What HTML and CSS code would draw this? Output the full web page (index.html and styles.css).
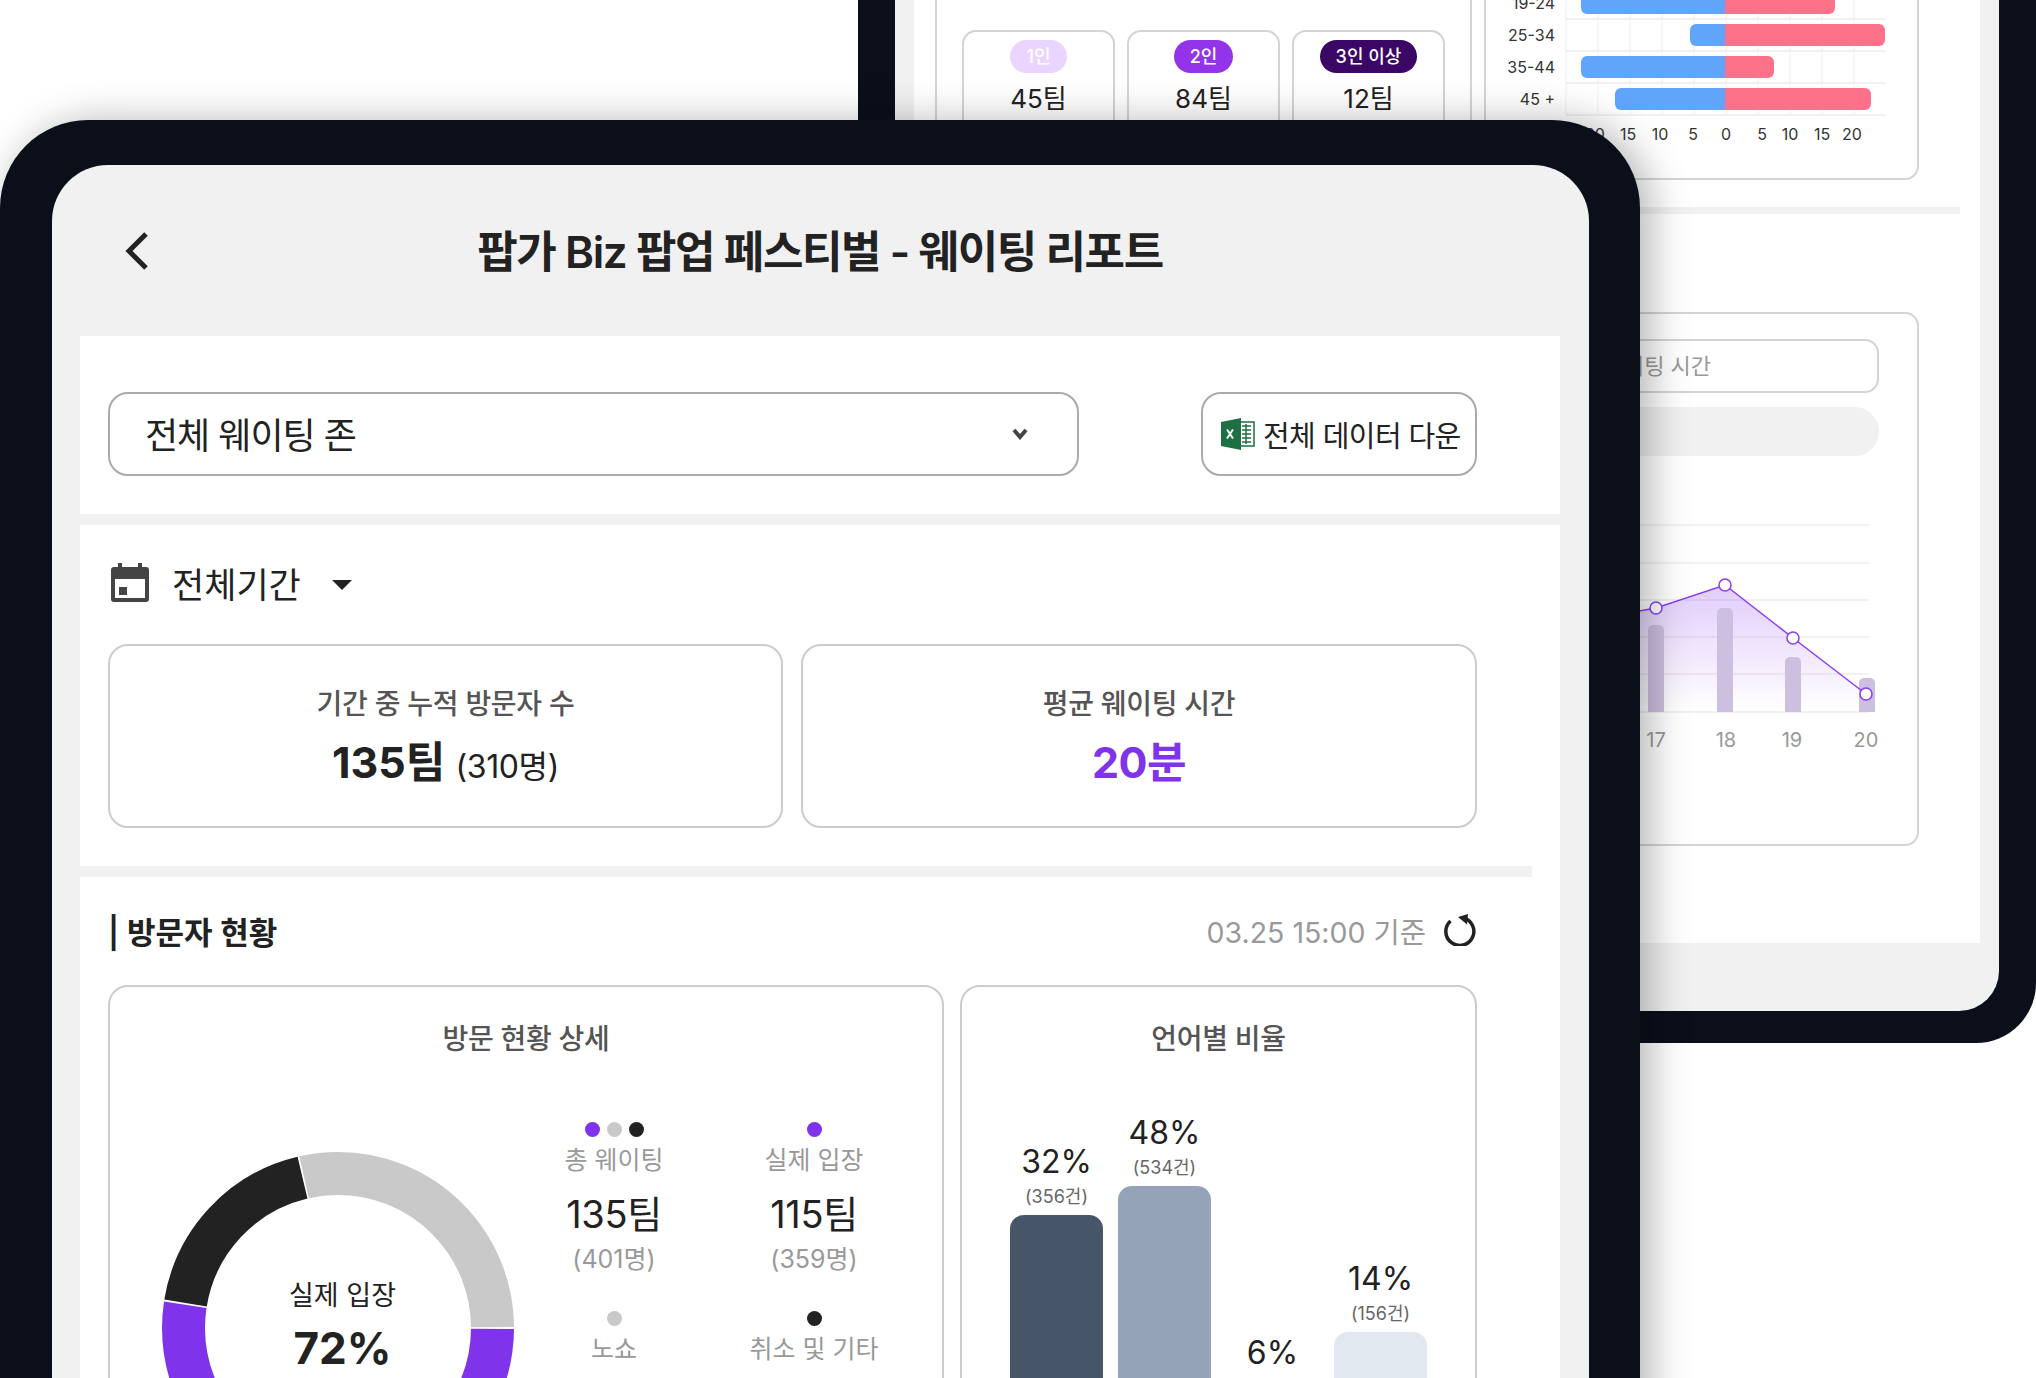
FILE: index.html
```html
<!DOCTYPE html>
<html lang="ko">
<head>
<meta charset="utf-8">
<title>웨이팅 리포트</title>
<link rel="stylesheet" href="styles.css">
</head>
<body>
<div class="stage">

  <!-- back tablet -->
  <div class="tablet-back">
    <div class="back-screen">
      <div class="back-page">
        <div class="back-row">
          <div class="back-card back-card-team">
            <div class="team-row">
              <div class="team"><span class="pill pill-1">1인</span><span class="team-num">45팀</span></div>
              <div class="team"><span class="pill pill-2">2인</span><span class="team-num">84팀</span></div>
              <div class="team"><span class="pill pill-3">3인 이상</span><span class="team-num">12팀</span></div>
            </div>
          </div>
          <div class="back-card back-card-age">
            <svg class="age-chart" viewBox="1486 -78 431 256" width="431" height="256">
              <g class="vgrid">
                <path d="M1566 -20V115M1598 -20V115M1630 -20V115M1662 -20V115M1694 -20V115M1726 -20V115M1758 -20V115M1790 -20V115M1822 -20V115M1854 -20V115"/>
              </g>
              <g class="hgrid">
                <path d="M1566 19H1885M1566 51H1885M1566 83H1885M1566 115H1885"/>
              </g>
              <path class="bar-blue" d="M1725 -8H1587a6 6 0 0 0-6 6v10a6 6 0 0 0 6 6H1725z"/>
              <path class="bar-pink" d="M1725 -8H1829a6 6 0 0 1 6 6v10a6 6 0 0 1-6 6H1725z"/>
              <path class="bar-blue" d="M1725 24H1696a6 6 0 0 0-6 6v10a6 6 0 0 0 6 6H1725z"/>
              <path class="bar-pink" d="M1725 24H1879a6 6 0 0 1 6 6v10a6 6 0 0 1-6 6H1725z"/>
              <path class="bar-blue" d="M1725 56H1587a6 6 0 0 0-6 6v10a6 6 0 0 0 6 6H1725z"/>
              <path class="bar-pink" d="M1725 56H1768a6 6 0 0 1 6 6v10a6 6 0 0 1-6 6H1725z"/>
              <path class="bar-blue" d="M1725 88H1621a6 6 0 0 0-6 6v10a6 6 0 0 0 6 6H1725z"/>
              <path class="bar-pink" d="M1725 88H1865a6 6 0 0 1 6 6v10a6 6 0 0 1-6 6H1725z"/>
              <g class="age-label">
                <text x="1555" y="9">19-24</text>
                <text x="1555" y="41">25-34</text>
                <text x="1555" y="73">35-44</text>
                <text x="1555" y="105">45 +</text>
              </g>
              <g class="age-axis">
                <text x="1595" y="140">20</text>
                <text x="1628" y="140">15</text>
                <text x="1660" y="140">10</text>
                <text x="1693" y="140">5</text>
                <text x="1726" y="140">0</text>
                <text x="1762" y="140">5</text>
                <text x="1790" y="140">10</text>
                <text x="1822" y="140">15</text>
                <text x="1852" y="140">20</text>
              </g>
            </svg>
          </div>
        </div>
        <div class="back-sep"></div>
        <div class="back-card back-card-time">
          <div class="time-input">평균 웨이팅 시간</div>
          <div class="time-pill"></div>
          <svg class="time-chart" viewBox="1600 500 300 270" width="300" height="270">
            <defs>
              <linearGradient id="areaGrad" x1="0" y1="0" x2="0" y2="1">
                <stop offset="0" stop-color="#8b3df0" stop-opacity=".26"/>
                <stop offset="1" stop-color="#8b3df0" stop-opacity="0"/>
              </linearGradient>
            </defs>
            <path class="time-grid" d="M1600 525H1869M1600 563H1869M1600 600H1869M1600 637H1869M1600 674H1869M1600 712H1869"/>
            <path fill="url(#areaGrad)" d="M1600 618L1656 608L1725 585L1793 638L1866 694V712H1600z"/>
            <g class="time-bars">
              <path d="M1648 712V630a5 5 0 0 1 5-5h6a5 5 0 0 1 5 5V712z"/>
              <path d="M1717 712V613a5 5 0 0 1 5-5h6a5 5 0 0 1 5 5V712z"/>
              <path d="M1785 712V662a5 5 0 0 1 5-5h6a5 5 0 0 1 5 5V712z"/>
              <path d="M1859 712V683a5 5 0 0 1 5-5h6a5 5 0 0 1 5 5V712z"/>
            </g>
            <path class="time-line" d="M1600 618L1656 608L1725 585L1793 638L1866 694"/>
            <g class="time-dot">
              <circle cx="1656" cy="608" r="6"/>
              <circle cx="1725" cy="585" r="6"/>
              <circle cx="1793" cy="638" r="6"/>
              <circle cx="1866" cy="694" r="6"/>
            </g>
            <g class="time-label">
              <text x="1656" y="747">17</text>
              <text x="1726" y="747">18</text>
              <text x="1792" y="747">19</text>
              <text x="1866" y="747">20</text>
            </g>
          </svg>
        </div>
      </div>
    </div>
  </div>

  <!-- front tablet -->
  <div class="tablet-front">
    <div class="screen">
      <header class="header">
        <svg class="back-arrow" viewBox="0 0 26 40" width="26" height="40"><path d="M22 3L5 20l17 17"/></svg>
        <h1 class="title">팝가 Biz 팝업 페스티벌 - 웨이팅 리포트</h1>
      </header>

      <section class="sec sec-select">
        <div class="select">
          <span>전체 웨이팅 존</span>
          <svg class="chev" viewBox="0 0 16 12" width="16" height="12"><path d="M2 2l6 7 6-7"/></svg>
        </div>
        <button class="down-btn">
          <svg viewBox="0 0 34 34" width="34" height="34">
            <path class="xl-sheet" d="M17 5H33V29H17z"/>
            <path class="xl-grid" d="M21 9H30M21 13H30M21 17H30M21 21H30M21 25H30M25 7V27"/>
            <path class="xl-book" d="M0 5L20 1V33L0 29z"/>
            <path class="xl-x" d="M6 12.500l6 9M12 12.500l-6 9"/>
          </svg>
          <span>전체 데이터 다운</span>
        </button>
      </section>

      <div class="content">
        <div class="period">
          <svg class="cal" viewBox="0 0 38 39" width="38" height="39">
            <path class="cal-fill" d="M7 0h4v4h16V0h4v4h4a3 3 0 0 1 3 3v29a3 3 0 0 1-3 3H3a3 3 0 0 1-3-3V7a3 3 0 0 1 3-3h4zM4 16v19h30V16z"/>
            <rect class="cal-fill" x="8" y="24" width="8" height="8"/>
          </svg>
          <span class="period-text">전체기간</span>
          <span class="caret"></span>
        </div>

        <div class="stats">
          <div class="stat">
            <div class="stat-label">기간 중 누적 방문자 수</div>
            <div class="stat-value">135팀 <small>(310명)</small></div>
          </div>
          <div class="stat">
            <div class="stat-label">평균 웨이팅 시간</div>
            <div class="stat-value stat-purple">20분</div>
          </div>
        </div>

        <div class="divider"></div>

        <div class="sec-head">
          <h2 class="sec-title">| 방문자 현황</h2>
          <div class="sec-date">
            <span>03.25 15:00 기준</span>
            <svg class="refresh" viewBox="0 0 32 32" width="32" height="32">
              <path class="refresh-arc" d="M19 3.800A14 14 0 1 1 6.500 7"/>
              <path class="refresh-head" d="M14 3L24 0L23 10.500z"/>
            </svg>
          </div>
        </div>

        <div class="panels">
          <div class="panel panel-visit">
            <div class="panel-title">방문 현황 상세</div>
            <div class="visit-body">
              <div class="donut">
                <svg viewBox="0 0 352 352" width="352" height="352">
                  <g class="donut-rings">
                    <circle class="ring-purple" cx="176" cy="176" r="154.500" pathLength="360" stroke-dasharray="188.400 171.600" stroke-dashoffset="-0.300"/>
                    <circle class="ring-black" cx="176" cy="176" r="154.500" pathLength="360" stroke-dasharray="67.400 292.600" stroke-dashoffset="-189.300"/>
                    <circle class="ring-gray" cx="176" cy="176" r="154.500" pathLength="360" stroke-dasharray="102.400 257.600" stroke-dashoffset="-257.300"/>
                  </g>
                </svg>
                <div class="donut-center">
                  <span class="donut-label">실제 입장</span>
                  <span class="donut-value">72%</span>
                </div>
              </div>
              <div class="visit-stats">
                <div class="vs">
                  <div class="dots"><i class="dot dot-purple"></i><i class="dot dot-gray"></i><i class="dot dot-black"></i></div>
                  <div class="vs-label">총 웨이팅</div>
                  <div class="vs-value">135팀</div>
                  <div class="vs-sub">(401명)</div>
                </div>
                <div class="vs">
                  <div class="dots"><i class="dot dot-purple"></i></div>
                  <div class="vs-label">실제 입장</div>
                  <div class="vs-value">115팀</div>
                  <div class="vs-sub">(359명)</div>
                </div>
                <div class="vs">
                  <div class="dots"><i class="dot dot-gray"></i></div>
                  <div class="vs-label">노쇼</div>
                </div>
                <div class="vs">
                  <div class="dots"><i class="dot dot-black"></i></div>
                  <div class="vs-label">취소 및 기타</div>
                </div>
              </div>
            </div>
          </div>
          <div class="panel panel-lang">
            <div class="panel-title">언어별 비율</div>
            <div class="lang-bars">
              <div class="lang"><div class="lang-pct">32%</div><div class="lang-sub">(356건)</div><div class="lang-bar lang-a" style="height:285px"></div></div>
              <div class="lang"><div class="lang-pct">48%</div><div class="lang-sub">(534건)</div><div class="lang-bar lang-b" style="height:314px"></div></div>
              <div class="lang"><div class="lang-pct">6%</div><div class="lang-sub">(66건)</div><div class="lang-bar lang-c" style="height:94px"></div></div>
              <div class="lang"><div class="lang-pct">14%</div><div class="lang-sub">(156건)</div><div class="lang-bar lang-d" style="height:168px"></div></div>
            </div>
          </div>
        </div>
      </div>
    </div>
  </div>

</div>
</body>
</html>
```

FILE: styles.css
```css
* { box-sizing: border-box; }
html, body { margin: 0; padding: 0; background: #fff; }
body {
  width: 2036px;
  height: 1378px;
  overflow: hidden;
  font-family: Inter, "Noto Sans CJK KR", sans-serif;
  color: #222;
}
.stage { position: relative; width: 2036px; height: 1378px; overflow: hidden; }

/* back tablet */
.tablet-back {
  position: absolute;
  left: 858px;
  top: -140px;
  width: 1178px;
  height: 1183px;
  background: #0a0f1a;
  padding: 37px 37px 32px;
  border-radius: 0 0 60px 0;
}
.back-screen {
  background: #f1f1f1;
  height: 100%;
  padding: 0 19px 68px;
  border-radius: 0 0 40px 0;
}
.back-page { background: #fff; height: 100%; padding: 23px 61px 0 21px; }
.back-row { display: flex; gap: 12px; height: 260px; }
.back-card { border: 2px solid #d4d4d4; border-radius: 14px; background: #fff; }
.back-card-team { width: 537px; padding: 108px 25px 0; overflow: hidden; }
.back-card-age { width: 435px; }
.age-chart { display: block; }
.team-row { display: flex; gap: 12px; }
.team {
  width: 153px;
  height: 120px;
  border: 2px solid #d4d4d4;
  border-radius: 14px;
  display: flex;
  flex-direction: column;
  align-items: center;
  padding-top: 8px;
}
.pill {
  height: 33px;
  padding: 0 16px;
  border-radius: 17px;
  font-size: 18px;
  font-weight: 500;
  line-height: 33px;
  color: #fff;
}
.pill-1 { background: #e9d5ff; }
.pill-2 { background: #9333ea; }
.pill-3 { background: #3b0764; }
.team-num { font-size: 26px; line-height: 36px; margin-top: 8px; font-weight: 400; }
.vgrid path { stroke: #efefef; stroke-width: 1; fill: none; }
.hgrid path { stroke: #f0f0f0; stroke-width: 2; fill: none; }
.bar-blue { fill: #60a5fa; }
.bar-pink { fill: #fe7289; }
.age-label text { font-size: 16px; fill: #333; text-anchor: end; }
.age-axis text { font-size: 16px; fill: #333; text-anchor: middle; }
.back-sep { height: 7px; background: #f1f1f1; margin: 27px -41px 98px -21px; }
.back-card-time { height: 534px; padding: 25px 17px 0 0; }
.time-input {
  height: 54px;
  margin-right: 21px;
  border: 2px solid #d4d4d4;
  border-radius: 14px;
  font-size: 22px;
  line-height: 50px;
  color: #999;
  padding-left: 618px;
}
.time-pill { height: 49px; margin: 14px 21px 0 0; background: #f1f1f1; border-radius: 25px; }
.time-chart { display: block; margin: 44px 0 0 auto; }
.time-grid { stroke: #f2f2f2; stroke-width: 2; fill: none; }
.time-bars path { fill: #cdbfe0; }
.time-line { stroke: #8b3df0; stroke-width: 1.500; fill: none; }
.time-dot circle { fill: #fff; stroke: #8b3df0; stroke-width: 1.500; }
.time-label text { font-size: 20px; fill: #999; text-anchor: middle; }

/* front tablet */
.tablet-front {
  position: absolute;
  left: 0;
  top: 120px;
  width: 1640px;
  height: 1400px;
  padding: 45px 51px 0 52px;
  background: #0a0f1a;
  border-radius: 88px;
  box-shadow: 10px 2px 40px rgba(0, 0, 0, .3);
}
.screen {
  height: 100%;
  padding: 0 29px 0 28px;
  background: #f1f1f1;
  border-radius: 56px;
  overflow: hidden;
}
.header {
  height: 171px;
  display: grid;
  grid-template-columns: 1fr auto 1fr;
  align-items: center;
  padding: 0 44px 4px;
}
.back-arrow { margin-top: 4px; }
.back-arrow path { fill: none; stroke: #222; stroke-width: 5; }
.title {
  grid-column: 2;
  margin: 0;
  font-size: 44px;
  font-weight: 600;
  letter-spacing: -1.4px;
  white-space: nowrap;
}

.sec-select {
  display: flex;
  justify-content: space-between;
  background: #fff;
  height: 178px;
  padding: 56px 83px 38px 28px;
  margin-bottom: 11px;
}
.select {
  width: 971px;
  height: 84px;
  border: 2px solid #aaa;
  border-radius: 20px;
  display: flex;
  align-items: center;
  justify-content: space-between;
  padding: 0 49px 3px 35px;
  font-size: 36px;
  letter-spacing: -1px;
}
.chev { margin-top: 3px; }
.chev path { fill: none; stroke: #444; stroke-width: 4; }
.down-btn {
  width: 276px;
  height: 84px;
  border: 2px solid #aaa;
  border-radius: 20px;
  background: #fff;
  display: flex;
  align-items: center;
  gap: 8px;
  padding: 0 0 1px 18px;
  font-family: inherit;
  font-size: 29px;
  letter-spacing: -.6px;
  color: #222;
  white-space: nowrap;
}
.xl-book { fill: #1d7044; }
.xl-x { stroke: #fff; stroke-width: 2; fill: none; }
.xl-sheet { fill: #fff; stroke: #1d7044; stroke-width: 1.500; }
.xl-grid { stroke: #1d7044; stroke-width: 1.500; fill: none; }

.content { background: #fff; height: 1400px; padding: 38px 83px 0 28px; }
.period { display: flex; align-items: center; height: 39px; padding-left: 3px; }
.cal-fill { fill: #444; }
.period-text { font-size: 35px; margin-left: 23px; }
.caret {
  width: 0;
  height: 0;
  margin: 4px 0 0 31px;
  border-left: 10px solid transparent;
  border-right: 10px solid transparent;
  border-top: 10px solid #222;
}
.stats { display: grid; grid-template-columns: 675px 676px; gap: 18px; margin-top: 42px; }
.stat {
  height: 184px;
  border: 2px solid #ccc;
  border-radius: 20px;
  text-align: center;
  padding-top: 38px;
}
.stat-label { font-size: 28px; line-height: 40px; font-weight: 500; color: #555; letter-spacing: -.3px; }
.stat-value { font-size: 43px; line-height: 60px; font-weight: 700; margin-top: 8px; }
.stat-value small { font-size: 32px; font-weight: 400; letter-spacing: -.4px; }
.stat-purple { color: #7f33ea; letter-spacing: -.5px; }
.divider { height: 11px; background: #f1f1f1; margin: 38px -55px 0 -28px; }

.sec-head { display: flex; justify-content: space-between; align-items: center; height: 52px; margin-top: 27px; }
.sec-title { margin: 0; font-size: 31px; font-weight: 600; }
.sec-date { display: flex; align-items: center; gap: 18px; font-size: 28.500px; color: #999; padding-right: 1px; }
.panels { display: grid; grid-template-columns: 836px 517px; gap: 16px; margin-top: 29px; }
.panel { border: 2px solid #ccc; border-radius: 20px; height: 600px; }
.panel-title { font-size: 28px; line-height: 42px; font-weight: 500; color: #555; text-align: center; margin-top: 31px; letter-spacing: -.3px; }
.refresh-arc { fill: none; stroke: #222; stroke-width: 3.500; }
.refresh-head { fill: #222; }

.visit-body { display: flex; align-items: flex-start; padding-left: 52px; }
.donut { position: relative; width: 352px; height: 352px; margin-top: 92px; }
.donut svg { display: block; }
.donut-rings circle { fill: none; stroke-width: 43; }
.ring-purple { stroke: #7f33ea; }
.ring-black { stroke: #222; }
.ring-gray { stroke: #c9c9c9; }
.donut-center {
  position: absolute;
  inset: 0;
  display: flex;
  flex-direction: column;
  align-items: center;
  padding: 125px 0 0 9px;
}
.donut-label { font-size: 27px; line-height: 38px; }
.donut-value { font-size: 44px; line-height: 60px; font-weight: 700; margin-top: 3px; }
.visit-stats { display: grid; grid-template-columns: 200px 200px; row-gap: 37px; margin-top: 62px; }
.vs { display: flex; flex-direction: column; align-items: center; }
.dots { display: flex; gap: 7px; height: 16px; }
.dot { width: 15px; height: 15px; border-radius: 50%; }
.dot-purple { background: #7f33ea; }
.dot-gray { background: #c9c9c9; }
.dot-black { background: #222; }
.vs-label { font-size: 25px; line-height: 30px; margin-top: 7px; color: #999; }
.vs-value { font-size: 38px; line-height: 44px; margin-top: 17px; font-weight: 400; letter-spacing: -.4px; }
.vs-sub { font-size: 25px; line-height: 30px; margin-top: 8px; color: #999; }

.lang-bars { display: flex; align-items: flex-end; gap: 15px; height: 440px; padding-left: 48px; }
.lang { width: 93px; display: flex; flex-direction: column; align-items: center; }
.lang-pct { font-size: 32px; line-height: 40px; font-weight: 400; }
.lang-sub { font-size: 18px; line-height: 24px; margin: 3px 0 6px; color: #666; }
.lang-bar { width: 93px; border-radius: 14px 14px 0 0; }
.lang-a { background: #475569; }
.lang-b { background: #94a3b8; }
.lang-c { background: #cbd5e1; }
.lang-d { background: #e2e8f0; }
```
